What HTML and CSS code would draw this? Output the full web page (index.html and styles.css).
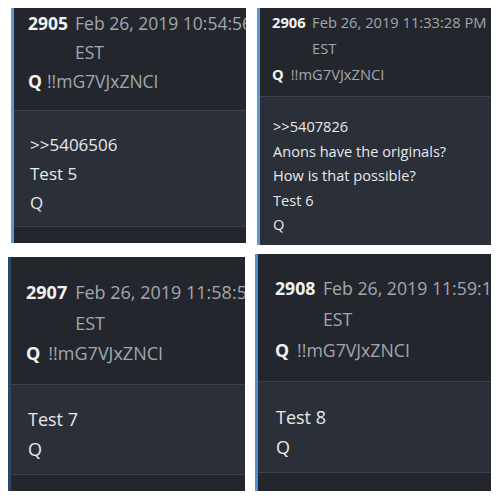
FILE: index.html
```html
<!DOCTYPE html>
<html>
<head>
<meta charset="utf-8">
<link rel="stylesheet" href="styles.css">
</head>
<body>
<div class="grid">
  <div class="card p1">
    <div class="head">
      <div class="row"><span class="num">2905</span><div class="date"><div class="nw">Feb 26, 2019 10:54:56 PM</div><div>EST</div></div></div>
      <div class="row trip"><span class="name">Q</span><span class="code">!!mG7VJxZNCI</span></div>
    </div>
    <div class="body">
      <div>&gt;&gt;5406506</div>
      <div>Test 5</div>
      <div>Q</div>
    </div>
    <div class="foot"></div>
  </div>
  <div class="card p2">
    <div class="head">
      <div class="row"><span class="num">2906</span><div class="date"><div class="nw">Feb 26, 2019 11:33:28 PM</div><div>EST</div></div></div>
      <div class="row trip"><span class="name">Q</span><span class="code">!!mG7VJxZNCI</span></div>
    </div>
    <div class="body grow">
      <div>&gt;&gt;5407826</div>
      <div>Anons have the originals?</div>
      <div>How is that possible?</div>
      <div>Test 6</div>
      <div>Q</div>
    </div>
  </div>
  <div class="card p3">
    <div class="head">
      <div class="row"><span class="num">2907</span><div class="date"><div class="nw">Feb 26, 2019 11:58:52 PM</div><div>EST</div></div></div>
      <div class="row trip"><span class="name">Q</span><span class="code">!!mG7VJxZNCI</span></div>
    </div>
    <div class="body">
      <div>Test 7</div>
      <div>Q</div>
    </div>
    <div class="foot"></div>
  </div>
  <div class="card p4">
    <div class="head">
      <div class="row"><span class="num">2908</span><div class="date"><div class="nw">Feb 26, 2019 11:59:14 PM</div><div>EST</div></div></div>
      <div class="row trip"><span class="name">Q</span><span class="code">!!mG7VJxZNCI</span></div>
    </div>
    <div class="body">
      <div>Test 8</div>
      <div>Q</div>
    </div>
    <div class="foot"></div>
  </div>
</div>
</body>
</html>
```
FILE: styles.css
```css
* { box-sizing: border-box; }
html, body { margin: 0; padding: 0; background: #ffffff; }
body { width: 500px; height: 500px; overflow: hidden; font-family: "Open Sans", "DejaVu Sans", sans-serif; }

.grid {
  display: grid;
  grid-template-columns: 250px 250px;
  align-items: start;
}

.card {
  display: flex;
  flex-direction: column;
  overflow: hidden;
  min-width: 0;
  background: #23262d;
  border-left: 3px solid #5a9ad8;
}

.head { background: #23262d; color: #a2a6ad; overflow: hidden; }
.row { display: flex; align-items: flex-start; white-space: nowrap; min-width: 0; }
.num { color: #f2f2f2; font-weight: 700; flex: none; }
.date { display: flex; flex-direction: column; min-width: 0; overflow: hidden; }
.nw { white-space: nowrap; overflow: hidden; text-overflow: clip; }
.name { color: #f2f2f2; font-weight: 700; }
.code { color: #a2a6ad; }

.body {
  background: #2b2f38;
  border-top: 1px solid #3c414b;
  color: #e8e9eb;
}
.grow { flex: 1; }
.foot { flex: 1; background: #23262d; border-top: 1px solid #3c414b; }

/* panel 1 */
.p1 { margin: 8px 4px 0 11px; height: 235px; }
.p1 .head { font-size: 17.5px; line-height: 29px; padding: 1px 0 14px 14px; }
.p1 .row:first-child { gap: 7px; }
.p1 .trip { gap: 5px; }
.p1 .body { font-size: 17px; line-height: 29px; padding: 19px 0 9px 16px; }

/* panel 2 */
.p2 { margin: 8px 9px 0 7px; height: 237px; }
.p2 .head { font-size: 14.7px; line-height: 26px; padding: 1px 0 9px 12px; }
.p2 .row:first-child { gap: 6.5px; }
.p2 .trip { gap: 7px; }
.p2 .body { font-size: 14.6px; line-height: 24.5px; padding: 17px 0 8px 13px; }

/* panel 3 */
.p3 { margin: 12px 5px 0 8px; height: 234px; border-left-color: #2d4661; }
.p3 .head { font-size: 18px; line-height: 30.5px; padding: 20px 0 15px 15px; }
.p3 .row:first-child { gap: 8px; }
.p3 .trip { gap: 8px; }
.p3 .body { font-size: 18px; line-height: 30px; padding: 19px 0 10px 17px; }

/* panel 4 */
.p4 { margin: 9px 9px 0 5px; height: 237px; border-left-color: #4f8fd6; }
.p4 .head { font-size: 17.7px; line-height: 31px; padding: 19px 0 15px 17px; }
.p4 .row:first-child { gap: 7.5px; }
.p4 .trip { gap: 8px; }
.p4 .body { font-size: 18px; line-height: 30px; padding: 20px 0 9.5px 18px; }
```
